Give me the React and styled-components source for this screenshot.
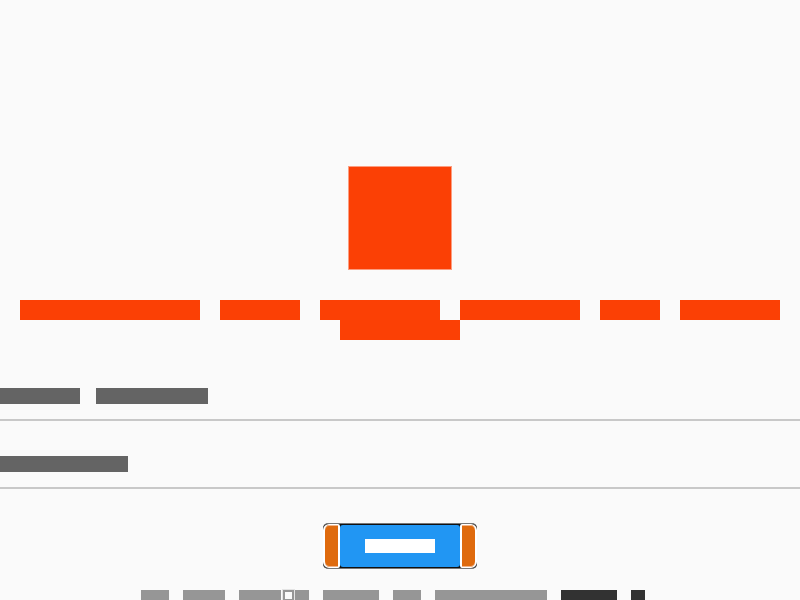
import React from "react";
import styled, { createGlobalStyle } from "styled-components";

const GlobalStyle = createGlobalStyle`
  * { box-sizing: border-box; }
  body { margin: 0; background: #fafafa; font-family: Roboto, sans-serif; overflow: hidden; }
`;

const Page = styled.main`
  display: flex;
  flex-direction: column;
  align-items: center;
  padding-top: 166px;
`;

const Logo = styled.div`
  width: 104px;
  height: 104px;
  background: #fb4005;
  border: 1px solid #fc9d80;
`;

const Heading = styled.h1`
  display: flex;
  flex-wrap: wrap;
  justify-content: center;
  column-gap: 20px;
  margin: 30px 0 0;
  padding: 0 20px;
`;

const Word = styled.span`
  flex: none;
  width: ${({ $width }) => $width}px;
  height: ${({ $size }) => $size}px;
  background: ${({ $color }) => $color};
`;

const Form = styled.form`
  display: flex;
  flex-direction: column;
  align-items: center;
  width: 100%;
  margin-top: 30px;
`;

const Field = styled.label`
  display: grid;
  width: 100%;
  height: 51px;
  margin-bottom: 17px;
`;

const FieldCaption = styled.span`
  grid-area: 1 / 1;
  display: flex;
  gap: 16px;
  padding-top: 18px;
`;

const FieldInput = styled.input`
  grid-area: 1 / 1;
  width: 100%;
  border: 0;
  border-bottom: 2px solid #c8c8c8;
  background: transparent;
  outline: none;
`;

const SubmitButton = styled.button`
  display: flex;
  width: 154px;
  height: 46px;
  margin-top: 17px;
  padding: 0;
  border: 0 solid #777777;
  border-width: 1px 0;
  border-radius: 5px;
  background: #111111;
`;

const Edge = styled.span`
  width: 17px;
  height: 44px;
  border: 2px solid #ffffff;
  border-width: 1px 2px;
  border-radius: ${({ $end }) => ($end ? "2px 6px 6px 2px" : "6px 2px 2px 6px")};
  background: #df6a0d;
  box-shadow: inset 0 1px #f2b487, inset 0 -1px #f2b487;
`;

const Face = styled.span`
  flex: 1;
  display: flex;
  align-items: center;
  justify-content: center;
  height: 42px;
  margin: 1px 0;
  border-radius: 3px;
  background: #2196f3;
`;

const Footer = styled.p`
  display: flex;
  gap: 14px;
  margin: 21px 0 0;
  padding-right: 14px;
`;

const AddressWord = styled.span`
  display: flex;
`;

const Glyph = styled.span`
  width: 11px;
  height: 11px;
  margin: 0 1px 0 2px;
  border: 2px solid #969696;
  background: #fafafa;
  box-shadow: 0 0 0 1px #e4e4e4;
`;

const FooterLink = styled.a`
  display: flex;
  gap: 14px;
`;

const headingWords = [180, 80, 120, 120, 60, 100, 120];
const fields = [
  { name: "email", type: "email", words: [80, 112] },
  { name: "password", type: "password", words: [128] },
];

export default function App() {
  return (
    <>
      <GlobalStyle />
      <Page>
        <Logo />
        <Heading>
          {headingWords.map((width, i) => (
            <Word key={i} $width={width} $size={20} $color="#fb4005" />
          ))}
        </Heading>
        <Form onSubmit={(event) => event.preventDefault()}>
          {fields.map(({ name, type, words }) => (
            <Field key={name}>
              <FieldCaption>
                {words.map((width) => (
                  <Word key={width} $width={width} $size={16} $color="#646464" />
                ))}
              </FieldCaption>
              <FieldInput name={name} type={type} />
            </Field>
          ))}
          <SubmitButton type="submit">
            <Edge />
            <Face>
              <Word $width={70} $size={14} $color="#ffffff" />
            </Face>
            <Edge $end />
          </SubmitButton>
        </Form>
        <Footer>
          <Word $width={28} $size={14} $color="#969696" />
          <Word $width={42} $size={14} $color="#969696" />
          <AddressWord>
            <Word $width={42} $size={14} $color="#969696" />
            <Glyph />
            <Word $width={14} $size={14} $color="#969696" />
          </AddressWord>
          <Word $width={56} $size={14} $color="#969696" />
          <Word $width={28} $size={14} $color="#969696" />
          <Word $width={112} $size={14} $color="#969696" />
          <FooterLink href="#">
            <Word $width={56} $size={14} $color="#323232" />
            <Word $width={14} $size={14} $color="#323232" />
          </FooterLink>
        </Footer>
      </Page>
    </>
  );
}
